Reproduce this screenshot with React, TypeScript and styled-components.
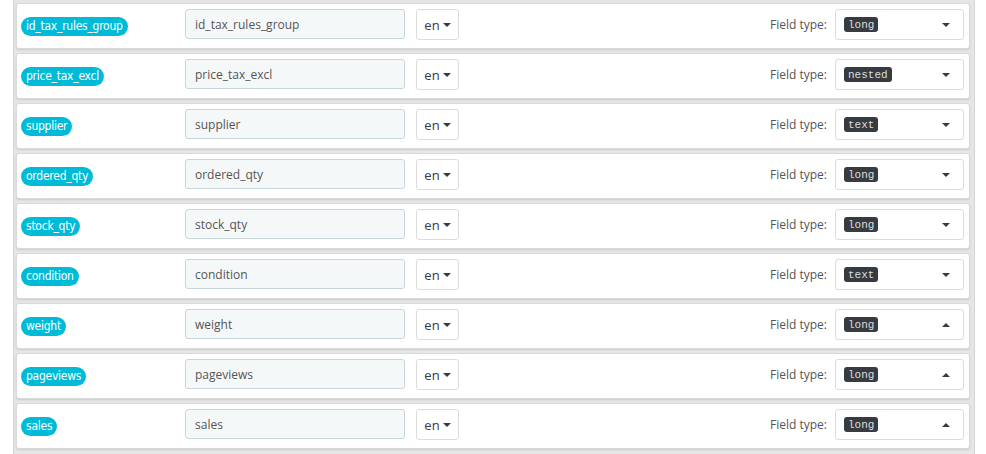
import { createGlobalStyle, styled } from 'styled-components';

const GlobalStyle = createGlobalStyle`
    html, body {
        margin: 0;
        padding: 0;
        background: #ffffff;
    }
    body {
        font-family: 'Open Sans', 'Noto Sans', sans-serif;
    }
`;

const Panel = styled.div`
    margin-left: 13px;
    width: 962px;
    height: 454px;
    box-sizing: border-box;
    padding: 3px 4px 0 2px;
    background: #e6e6e6;
    border-left: 1px solid #d4d4d4;
    border-right: 1px solid #d4d4d4;
    overflow: hidden;
`;

const Row = styled.div`
    display: flex;
    align-items: flex-start;
    height: 46px;
    box-sizing: border-box;
    margin-bottom: 4px;
    padding: 5px 5px 0 4px;
    background: #ffffff;
    border: 1px solid #dadada;
    border-radius: 3px;
    box-shadow: 0 1px 2px rgba(0, 0, 0, 0.12);
`;

const NameCol = styled.div`
    width: 164px;
    flex: none;
    padding-top: 8px;
`;

const Pill = styled.span`
    display: block;
    width: fit-content;
    height: 19px;
    line-height: 19px;
    padding: 0 5px;
    border-radius: 10px;
    background: #00bbd8;
    color: #ffffff;
    font-family: 'DejaVu Sans Condensed', 'DejaVu Sans', sans-serif;
    font-stretch: condensed;
    font-size: 12px;
    letter-spacing: -0.25px;
`;

const NameInput = styled.div`
    width: 220px;
    height: 30px;
    box-sizing: border-box;
    flex: none;
    padding: 0 9px;
    background: #f5f8f9;
    border: 1px solid #c7d6db;
    border-radius: 3px;
    color: #555555;
    font-size: 12px;
    line-height: 30px;
`;

const LangButton = styled.div`
    width: 43px;
    height: 31px;
    box-sizing: border-box;
    flex: none;
    margin-left: 11px;
    display: flex;
    align-items: center;
    justify-content: center;
    gap: 3px;
    background: #ffffff;
    border: 1px solid #dcdcdc;
    border-radius: 3px;
    color: #363a41;
    font-size: 13px;
`;

const Caret = styled.span<{ $up?: boolean }>`
    width: 0;
    height: 0;
    border-left: 4px solid transparent;
    border-right: 4px solid transparent;
    ${({ $up }) => ($up ? 'border-bottom: 4px solid #363a41;' : 'border-top: 4px solid #363a41;')}
`;

const Spacer = styled.div`
    flex: 1;
`;

const TypeLabel = styled.div`
    height: 30px;
    line-height: 32px;
    margin-right: 8px;
    color: #555555;
    font-size: 12px;
`;

const TypeSelect = styled.div`
    width: 129px;
    height: 31px;
    box-sizing: border-box;
    flex: none;
    display: flex;
    align-items: center;
    justify-content: space-between;
    padding: 0 13px 0 8px;
    background: #ffffff;
    border: 1px solid #dcdcdc;
    border-radius: 3px;
`;

const TypeBadge = styled.span`
    display: inline-block;
    height: 15px;
    line-height: 16px;
    padding: 0 4px;
    border-radius: 3px;
    background: #363a41;
    color: #dddddd;
    font-family: 'Liberation Mono', 'DejaVu Sans Mono', monospace;
    font-size: 11px;
`;

const fields = [
    { name: 'id_tax_rules_group', type: 'long', open: false },
    { name: 'price_tax_excl', type: 'nested', open: false },
    { name: 'supplier', type: 'text', open: false },
    { name: 'ordered_qty', type: 'long', open: false },
    { name: 'stock_qty', type: 'long', open: false },
    { name: 'condition', type: 'text', open: false },
    { name: 'weight', type: 'long', open: true },
    { name: 'pageviews', type: 'long', open: true },
    { name: 'sales', type: 'long', open: true },
];

const App = () => (
    <>
        <GlobalStyle />
        <Panel>
            {fields.map(field => (
                <Row key={field.name}>
                    <NameCol>
                        <Pill>{field.name}</Pill>
                    </NameCol>
                    <NameInput>{field.name}</NameInput>
                    <LangButton>
                        en <Caret />
                    </LangButton>
                    <Spacer />
                    <TypeLabel>Field type:</TypeLabel>
                    <TypeSelect>
                        <TypeBadge>{field.type}</TypeBadge>
                        <Caret $up={field.open} />
                    </TypeSelect>
                </Row>
            ))}
        </Panel>
    </>
);

export default App;
